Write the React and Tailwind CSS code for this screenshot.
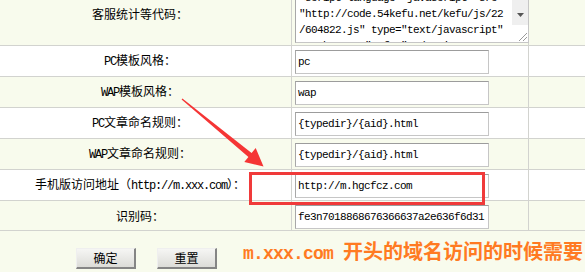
import React from "react";

const L = ({ children }) => (
  <span className="font-['Liberation_Mono',monospace] text-[12px] tracking-[-1.2px]">{children}</span>
);

const cjk = "font-['Noto_Sans_CJK_SC','Noto_Sans',sans-serif]";

function Field({ value }) {
  return (
    <div className="mt-[4px] ml-[3px] w-[194px] h-[24px] bg-white border border-[#c6c6c6] border-t-[#9c9c9c] border-l-[#a8a8a8] flex items-center pl-[2px] font-['Liberation_Mono',monospace] text-[11px] tracking-[-0.6px] text-black whitespace-nowrap overflow-hidden">
      {value}
    </div>
  );
}

function Row({ label, children, cream, h = "h-[31px]" }) {
  return (
    <div className={`flex ${h} border-b border-[#d2d3cf] ${cream ? "bg-[#f8fbed]" : "bg-white"}`}>
      <div className={`w-[292px] shrink-0 border-r border-[#d2d3cf] flex items-center justify-center pr-[11px] text-[12px] text-black ${cjk}`}>
        <span className="whitespace-nowrap">{label}</span>
      </div>
      <div className="w-[237px] shrink-0 border-r border-[#d2d3cf]">{children}</div>
      <div className="flex-1" />
    </div>
  );
}

function Btn({ children }) {
  return (
    <div className={`w-[60px] h-[21px] flex items-center justify-center bg-gradient-to-b from-[#f6f6f4] to-[#dcdcd8] border-t border-l border-[#efefef] border-r-2 border-b-2 border-r-[#858585] border-b-[#858585] text-[12px] text-black ${cjk}`}>
      {children}
    </div>
  );
}

export default function App() {
  const lines = [
    '<script language="javascript" src=',
    '"http://code.54kefu.net/kefu/js/22',
    '/604822.js" type="text/javascript"',
    '   charset="utf-8"></script>',
  ];
  return (
    <div className="relative w-[585px] h-[272px] overflow-hidden bg-[#f8fbed]">
      <div className="-mt-[17px]">
        <Row cream h="h-[63px]" label="客服统计等代码：">
          <div className="mt-[3px] ml-[3px] w-[234px] h-[57px] bg-white border border-[#c6c6c6] border-t-[#9c9c9c] border-l-[#a8a8a8] flex overflow-hidden">
            <div className="flex-1 pl-[3px] pt-[3px] overflow-hidden font-['Liberation_Mono',monospace] text-[11px] tracking-[-0.6px] leading-[16px] text-black whitespace-pre">
              {lines.map((l, i) => (
                <div key={i}>{l}</div>
              ))}
            </div>
            <div className="w-[16px] flex flex-col">
              <div className="flex-1 bg-[#efefef] flex items-end justify-center pb-[8px]">
                <svg width="7" height="4" viewBox="0 0 7 4">
                  <polygon points="0,0 7,0 3.5,4" fill="#555" />
                </svg>
              </div>
              <div className="h-[17px] bg-white flex items-end justify-end pr-[1px] pb-[1px]">
                <svg width="10" height="10" viewBox="0 0 10 10">
                  <line x1="2" y1="10" x2="10" y2="2" stroke="#9a9a9a" strokeWidth="1" />
                  <line x1="6" y1="10" x2="10" y2="6" stroke="#9a9a9a" strokeWidth="1" />
                </svg>
              </div>
            </div>
          </div>
        </Row>
        <Row label={<><L>PC</L>模板风格：</>}>
          <Field value="pc" />
        </Row>
        <Row cream label={<><L>WAP</L>模板风格：</>}>
          <Field value="wap" />
        </Row>
        <Row label={<><L>PC</L>文章命名规则：</>}>
          <Field value="{typedir}/{aid}.html" />
        </Row>
        <Row cream label={<><L>WAP</L>文章命名规则：</>}>
          <Field value="{typedir}/{aid}.html" />
        </Row>
        <Row label={<>手机版访问地址（<L>http://m.xxx.com</L>）：</>}>
          <Field value="http://m.hgcfcz.com" />
        </Row>
        <Row cream h="h-[30px]" label="识别码：">
          <Field value="fe3n7018868676366637a2e636f6d31" />
        </Row>
        <div className="flex items-start pl-[76px]">
          <div className="mt-[17px]">
            <Btn>确定</Btn>
          </div>
          <div className="mt-[17px] ml-[21px]">
            <Btn>重置</Btn>
          </div>
          <div className={`mt-[10px] ml-[26px] whitespace-nowrap text-[20px] leading-[20px] font-bold text-[#ff7a22] ${cjk}`}>
            <span className="font-['Liberation_Mono',monospace] text-[18px] tracking-[-0.8px]">m.xxx.com </span>
            开头的域名访问的时候需要
          </div>
        </div>
      </div>

      <div className="absolute left-[249px] top-[172px] w-[236px] h-[33px] border-[3px] border-[#f03a3a]" />
      <svg className="absolute left-0 top-0 pointer-events-none" width="585" height="272" viewBox="0 0 585 272">
        <polygon
          points="182.4,98.5 251.6,153.1 255.7,148.1 263.5,166.5 244.3,161.9 248.4,156.9 181.6,99.5"
          fill="#f53535"
        />
      </svg>
    </div>
  );
}
